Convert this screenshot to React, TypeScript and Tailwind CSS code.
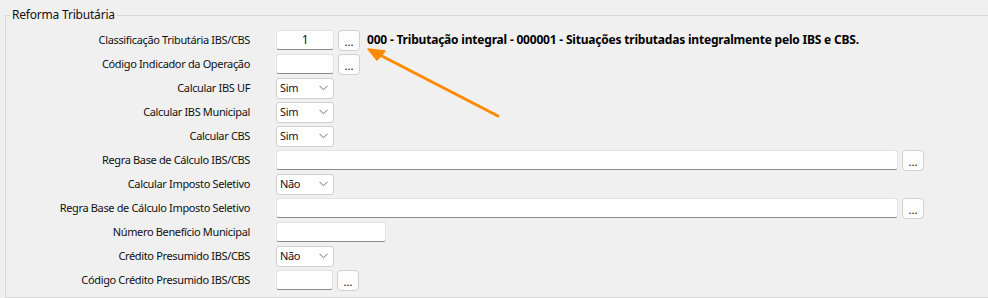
type Row =
  | { label: string; kind: "input"; width: string; value?: string; button?: boolean; note?: string }
  | { label: string; kind: "select"; value: string };

const rows: Row[] = [
  {
    label: "Classificação Tributária IBS/CBS",
    kind: "input",
    width: "w-[58px]",
    value: "1",
    button: true,
    note: "000 - Tributação integral - 000001 - Situações tributadas integralmente pelo IBS e CBS.",
  },
  { label: "Código Indicador da Operação", kind: "input", width: "w-[58px]", button: true },
  { label: "Calcular IBS UF", kind: "select", value: "Sim" },
  { label: "Calcular IBS Municipal", kind: "select", value: "Sim" },
  { label: "Calcular CBS", kind: "select", value: "Sim" },
  { label: "Regra Base de Cálculo IBS/CBS", kind: "input", width: "w-[622px]", button: true },
  { label: "Calcular Imposto Seletivo", kind: "select", value: "Não" },
  { label: "Regra Base de Cálculo Imposto Seletivo", kind: "input", width: "w-[622px]", button: true },
  { label: "Número Benefício Municipal", kind: "input", width: "w-[110px]" },
  { label: "Crédito Presumido IBS/CBS", kind: "select", value: "Não" },
  { label: "Código Crédito Presumido IBS/CBS", kind: "input", width: "w-[57px]", button: true },
];

function Dots() {
  return (
    <button
      type="button"
      className="ml-[4px] flex h-[21px] w-[22px] items-end justify-center rounded-[4px] border border-[#d0d0d0] bg-[#fdfdfd] pb-[3px] text-[11px] leading-none tracking-normal text-black"
    >
      ...
    </button>
  );
}

function Select({ value }: { value: string }) {
  return (
    <div className="flex h-[21px] w-[58px] items-center justify-between rounded-[3px] border border-[#cfcfcf] bg-white pl-[3px] pr-[4px]">
      <span>{value}</span>
      <svg width="9" height="6" viewBox="0 0 9 6" className="mr-[1px]">
        <path d="M0.5 0.8 L4.5 4.8 L8.5 0.8" fill="none" stroke="#6b6b6b" strokeWidth="1" />
      </svg>
    </div>
  );
}

export default function App() {
  return (
    <div className="relative h-[298px] w-[988px] overflow-hidden bg-[#f0f0f0] pt-[7px] text-[11px] tracking-[-0.35px] text-[#111] [font-family:'Noto_Sans',sans-serif]">
      <fieldset className="ml-[5px] border border-r-0 border-[#d8d8d8] pb-[5px]">
        <legend className="ml-[4px] px-[2px] text-[12px] leading-4 tracking-[-0.2px]">Reforma Tributária</legend>
        <div className="pt-[5px]">
          {rows.map((r) => (
            <div key={r.label} className="flex h-6 items-center">
              <div className="w-[244px] shrink-0 text-right leading-4">{r.label}</div>
              <div className="ml-[26px] flex items-center">
                {r.kind === "select" ? (
                  <Select value={r.value} />
                ) : (
                  <>
                    <div
                      className={`${r.width} flex h-[20px] items-center justify-center rounded-[3px] border border-[#e3e3e3] border-b-[#8a8a8a] bg-white text-[12px]`}
                    >
                      {r.value}
                    </div>
                    {r.button && <Dots />}
                    {r.note && (
                      <span className="ml-[7px] text-[12px] font-bold tracking-[-0.2px] text-black">{r.note}</span>
                    )}
                  </>
                )}
              </div>
            </div>
          ))}
        </div>
      </fieldset>

      <svg className="pointer-events-none absolute left-0 top-0" width="988" height="298">
        <line x1="498" y1="116" x2="378" y2="54" stroke="#ff8a00" strokeWidth="3" strokeLinecap="round" />
        <polygon points="368,49 385,51 377,60" fill="#ff8a00" stroke="#ff8a00" strokeWidth="1.5" strokeLinejoin="round" />
      </svg>
    </div>
  );
}
